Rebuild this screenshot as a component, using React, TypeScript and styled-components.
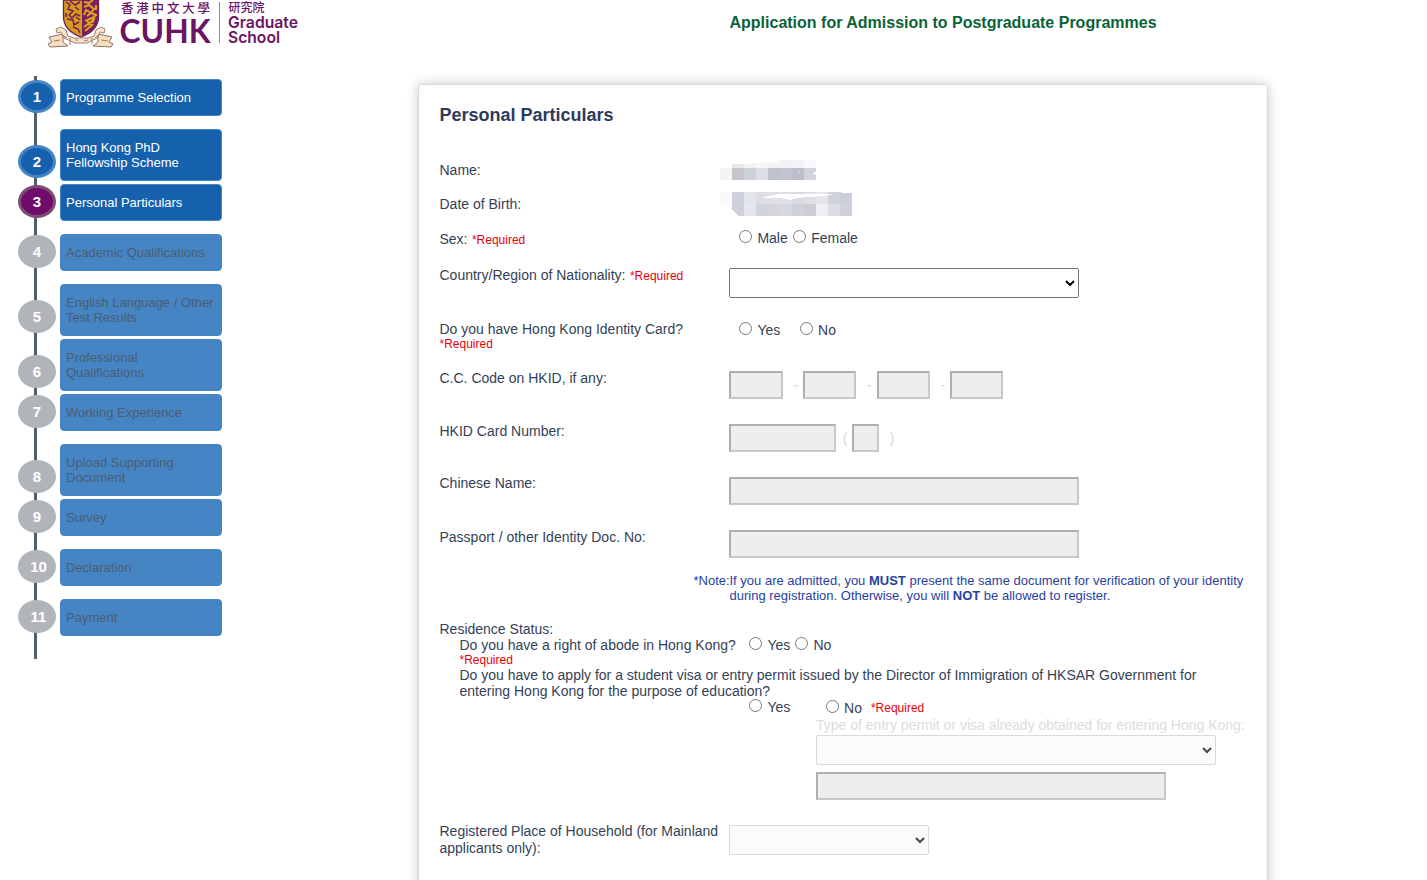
import React from 'react';
import styled, { createGlobalStyle, css } from 'styled-components';

const GlobalStyle = createGlobalStyle`
  * { box-sizing: border-box; }
  html, body { margin: 0; padding: 0; background: #fff; overflow: hidden; }
  body { font-family: Arial, "Liberation Sans", "Noto Sans CJK TC", sans-serif; font-size: 14px; color: #343f58; }
`;

const Page = styled.div`
  height: 880px;
  overflow: hidden;
  display: flex;
  flex-direction: column;
`;

const Header = styled.header`
  display: flex;
  flex: none;
  height: 76px;
`;

const LogoArea = styled.div`
  width: 729.5px;
  padding-left: 44px;
  svg { display: block; }
`;

const PageTitle = styled.h1`
  margin: 13px 0 0;
  font-size: 16px;
  line-height: 20px;
  font-weight: bold;
  color: #0b6238;
  white-space: nowrap;
`;

const Body = styled.div`
  display: flex;
  align-items: flex-start;
`;

const Sidebar = styled.nav`
  flex: none;
  width: 418px;
`;

const StepList = styled.ol`
  list-style: none;
  margin: 0;
  padding: 3px 0 10px 18px;
  height: 583px;
  background: linear-gradient(#525f6b, #525f6b) 34px 0 / 3px 100% no-repeat;
`;

type StepState = 'done' | 'current' | 'pending';

const Step = styled.li<{ $double?: boolean }>`
  display: flex;
  align-items: flex-start;
  gap: 4px;
  margin-bottom: ${(p) => (p.$double ? 3 : 13)}px;
`;

const badgeColours = {
  done: css`background: #1661ae; border-color: #4585c3;`,
  current: css`background: #700c6c; border-color: #7b4f70;`,
  pending: css`background: #b1b5ba; border-color: #b1b5ba;`,
};

const StepBadge = styled.span<{ $state: StepState; $double?: boolean; $wide?: boolean }>`
  width: 38px;
  height: 33px;
  margin-top: ${(p) => (p.$double ? 16 : 1)}px;
  border: 3px solid;
  border-radius: 50%;
  display: flex;
  align-items: center;
  justify-content: center;
  padding-left: ${(p) => (p.$wide ? 3 : 0)}px;
  color: #fff;
  font-size: 15px;
  font-weight: bold;
  ${(p) => badgeColours[p.$state]}
`;

const StepLabel = styled.span<{ $state: StepState; $double?: boolean }>`
  width: 162px;
  height: ${(p) => (p.$double ? 52 : 37)}px;
  display: flex;
  align-items: center;
  padding: 0 5px;
  border: 1px solid #4585c3;
  border-radius: 4px;
  font-size: 13px;
  line-height: 15px;
  white-space: pre;
  background: ${(p) => (p.$state === 'pending' ? '#4585c3' : '#1661ae')};
  color: ${(p) => (p.$state === 'pending' ? '#4b5d72' : '#fff')};
`;

const Card = styled.main`
  width: 850px;
  height: 860px;
  margin-top: 8px;
  padding: 20px 0 0 20.5px;
  background: #fff;
  border: 1px solid #d9d9d9;
  border-radius: 4px;
  box-shadow: 0 0 12px rgba(0, 0, 0, 0.22);
`;

const SectionTitle = styled.h2`
  margin: 0;
  height: 48px;
  font-size: 18px;
  line-height: 20px;
  color: #2e3a5c;
`;

const Row = styled.div<{ $height: number }>`
  display: grid;
  grid-template-columns: 289.5px 1fr;
  height: ${(p) => p.$height}px;
`;

const Label = styled.div<{ $top: number; $line?: number }>`
  padding-top: ${(p) => p.$top}px;
  line-height: ${(p) => p.$line ?? 16}px;
  white-space: nowrap;
`;

const Field = styled.div<{ $top: number }>`
  padding-top: ${(p) => p.$top}px;
`;

const Required = styled.span<{ $block?: boolean; $gap?: number }>`
  color: #e8000b;
  font-size: 12px;
  line-height: 14px;
  margin-left: ${(p) => p.$gap ?? 0}px;
  ${(p) => p.$block && css`display: block;`}
`;

const Options = styled.div<{ $indent: number; $gap: number }>`
  display: flex;
  align-items: center;
  gap: ${(p) => p.$gap}px;
  padding-left: ${(p) => p.$indent}px;
  height: 16px;
`;

const Option = styled.label<{ $raised?: boolean }>`
  display: flex;
  align-items: center;
  gap: 5.4px;
  line-height: 16px;
  white-space: nowrap;
  margin-bottom: ${(p) => (p.$raised ? 2 : 0)}px;
`;

const Radio = styled.input.attrs({ type: 'radio' })`
  width: 13px;
  height: 13px;
  margin: 0 0 3px;
`;

const Select = styled.select<{ $width: number }>`
  display: block;
  width: ${(p) => p.$width}px;
  height: 30px;
  font: 14px Arial, "Liberation Sans", sans-serif;

  &:disabled {
    opacity: 1;
    color: #484848;
    background-color: #fbfbfb;
    border-color: #d9d9d9;
    border-radius: 2px;
  }
`;

const TextBox = styled.input.attrs({ type: 'text', disabled: true })<{ $width: number }>`
  display: block;
  flex: none;
  width: ${(p) => p.$width}px;
  height: 28px;
  padding: 0;
  background: #eee;
  border: 2px solid;
  border-color: #afafaf #c8c8c8 #c8c8c8 #afafaf;
`;

const Inline = styled.div`
  display: flex;
  align-items: center;
`;

const Separator = styled.span<{ $width: number; $pad: number }>`
  width: ${(p) => p.$width}px;
  padding-left: ${(p) => p.$pad}px;
  color: #d6d8dc;
  line-height: 28px;
`;

const Note = styled.p`
  display: grid;
  grid-template-columns: 36px 1fr;
  margin: 0 0 18px 254px;
  font-size: 13px;
  line-height: 15px;
  color: #283f9f;
  white-space: nowrap;
`;

const Residence = styled.section`
  height: 194px;
  line-height: 16px;
  white-space: nowrap;
`;

const Questions = styled.div`
  padding-left: 20px;
`;

const AbodeRow = styled.div`
  display: grid;
  grid-template-columns: 289.5px 1fr;
  height: 30px;
`;

const VisaText = styled.div`
  height: 32px;
`;

const VisaOptions = styled.div`
  display: flex;
  align-items: center;
  height: 18px;
  padding-left: 289.5px;
`;

const VisaType = styled.div`
  padding-left: 356.5px;
  color: #dcdcdc;
`;

const VisaFields = styled.div`
  display: grid;
  gap: 7px;
  padding-top: 2px;
`;

const Mosaic = styled.svg`
  display: block;
  margin-left: -9px;
`;

const Logo = () => (
  <svg width="270" height="50" viewBox="44 0 270 50">
    <path d="M49 37l14-3v8l5 4-18 1-2-3 4-2zM112 37l-14-3v8l-5 4 18 1 2-3-4-2z" fill="#f4dfbf" stroke="#85605c" strokeWidth="0.9" />
    <path d="M56 29l5-2 5 3 2 6 6 2h14l6-2 2-6 5-3 4 2-1 4-4-1-3 6-10 5H75l-11-5-3-6-4 1z" fill="#f7e5ca" stroke="#85605c" strokeWidth="0.8" />
    <path d="M63.5 0h35v17c0 10-7 16-17.500 20C70.500 33 63.500 27 63.500 17z" fill="#d89a18" stroke="#6c1765" strokeWidth="1.3" />
    <path d="M82 0h16v17c0 10-7 16-16 19z" fill="#76205d" />
    <path d="M66 2l4 3-2 4 5 2-4 4 3 3 4-4 4 2M70 1l5 4 5-3M75 7l4 3M67 19l6 1 1 5 5-3M73 27l5 2 2 4M76 17l4 3M66 13v4" fill="none" stroke="#711c60" strokeWidth="1.5" />
    <path d="M84 2l5 1 4-3M84 7l5-2 5 4-3 4-5-3-2 5M96 5v5M87 16l4-3 5 2-4 3-5 2M85 20l5 3 5-5M84 27l4-3 4 1-7 6M94 20l-2 3" fill="none" stroke="#e0a31b" strokeWidth="2" />
    <path d="M70 38v7M75 40h3M84 41l4-1M92 38v6M62 35l5 3M99 35l-4 3M54 41l6-1M101 40l7 1" fill="none" stroke="#a97561" strokeWidth="1" />
    <g fill="#6b1466">
      <text x="121" y="12.500" fontFamily="Noto Sans CJK TC, sans-serif" fontSize="12.5" fontWeight="500" textLength="89">香港中文大學</text>
      <text x="119.5" y="43" fontFamily="Lato, sans-serif" fontSize="33" fontWeight="700" textLength="91" lengthAdjust="spacingAndGlyphs">CUHK</text>
      <text x="228.500" y="11.500" fontFamily="Noto Sans CJK TC, sans-serif" fontSize="12" fontWeight="500" textLength="36">研究院</text>
      <text x="228" y="27.500" fontFamily="Inter, sans-serif" fontSize="16" fontWeight="600" textLength="70" lengthAdjust="spacingAndGlyphs">Graduate</text>
      <text x="228" y="43" fontFamily="Inter, sans-serif" fontSize="16" fontWeight="600" textLength="52" lengthAdjust="spacingAndGlyphs">School</text>
    </g>
    <path d="M219.500 2v41" stroke="#a77ba4" />
  </svg>
);

const nameTop = ['#fff', '#e8e8ea', '#f1f2f4', '#f7f7f9', '#f2f3f5', '#f2f2f5', '#f2f3f6', '#f9f9fb'];
const nameBottom = ['#f5f5f6', '#c6c6ca', '#ccd2d8', '#dcdde5', '#bdc3c9', '#c2c5cf', '#bcbfcb', '#d2d4dd'];
const birthTop = ['#fbf9f9', '#ced1db', '#e3e5eb', '#dcdee3', '#dee0e4', '#dee0e5', '#d8dae4', '#dfe0e4', '#e5e6ea', '#d1d2d8', '#cbced9'];
const birthBottom = ['#fcfafa', '#cfd1da', '#e6e6ec', '#d0d4dc', '#d5d5da', '#d5d8e0', '#d0d1d7', '#cdcdd7', '#f0f0f3', '#dcdce2', '#ced1da'];

const HiddenName = () => (
  <Mosaic width="96" height="20" shapeRendering="crispEdges">
    {nameTop.map((c, i) => <rect key={i} x={i * 12} y="0" width="12" height="8" fill={c} />)}
    {nameBottom.map((c, i) => <rect key={i} x={i * 12} y="8" width="12" height="12" fill={c} />)}
    <path d="M0 0h62l-12 3-15 0-11 1H0zM92 13l4-1v3zM79 12h1v1h-1z" fill="#fff" />
  </Mosaic>
);

const HiddenBirth = () => (
  <Mosaic width="132" height="24" shapeRendering="crispEdges">
    {birthTop.map((c, i) => <rect key={i} x={i * 12} y="0" width="12" height="12" fill={c} />)}
    {birthBottom.map((c, i) => <rect key={i} x={i * 12} y="12" width="12" height="12" fill={c} />)}
    <path d="M0 12l12 6 6 6H0zM43 5l17-3 51 0v1l-21 2-14 1-6 2-9-2H43zM121 0h11v1h-11z" fill="#fff" />
  </Mosaic>
);

const steps: { text: string; state: StepState }[] = [
  { text: 'Programme Selection', state: 'done' },
  { text: 'Hong Kong PhD\nFellowship Scheme', state: 'done' },
  { text: 'Personal Particulars', state: 'current' },
  { text: 'Academic Qualifications', state: 'pending' },
  { text: 'English Language / Other\nTest Results', state: 'pending' },
  { text: 'Professional\nQualifications', state: 'pending' },
  { text: 'Working Experience', state: 'pending' },
  { text: 'Upload Supporting\nDocument', state: 'pending' },
  { text: 'Survey', state: 'pending' },
  { text: 'Declaration', state: 'pending' },
  { text: 'Payment', state: 'pending' },
];

export default function App() {
  return (
    <Page>
      <GlobalStyle />
      <Header>
        <LogoArea><Logo /></LogoArea>
        <PageTitle>Application for Admission to Postgraduate Programmes</PageTitle>
      </Header>
      <Body>
        <Sidebar>
          <StepList>
            {steps.map(({ text, state }, i) => {
              const double = text.includes('\n');
              return (
                <Step key={text} $double={double}>
                  <StepBadge $state={state} $double={double} $wide={i > 8}>{i + 1}</StepBadge>
                  <StepLabel $state={state} $double={double}>{text}</StepLabel>
                </Step>
              );
            })}
          </StepList>
        </Sidebar>
        <Card>
          <SectionTitle>Personal Particulars</SectionTitle>
          <Row $height={34}>
            <Label $top={9}>Name:</Label>
            <Field $top={7}><HiddenName /></Field>
          </Row>
          <Row $height={34}>
            <Label $top={9}>Date of Birth:</Label>
            <Field $top={5}><HiddenBirth /></Field>
          </Row>
          <Row $height={37}>
            <Label $top={10}>Sex: <Required $gap={0.5}>*Required</Required></Label>
            <Field $top={9}>
              <Options $indent={10} $gap={5}>
                <Option><Radio name="sex" />Male</Option>
                <Option><Radio name="sex" />Female</Option>
              </Options>
            </Field>
          </Row>
          <Row $height={53}>
            <Label $top={9}>Country/Region of Nationality: <Required $gap={0.5}>*Required</Required></Label>
            <Field $top={10}><Select $width={350} /></Field>
          </Row>
          <Row $height={53}>
            <Label $top={10}>Do you have Hong Kong Identity Card?<Required $block>*Required</Required></Label>
            <Field $top={11}>
              <Options $indent={10} $gap={19.4}>
                <Option><Radio name="hkid" />Yes</Option>
                <Option><Radio name="hkid" />No</Option>
              </Options>
            </Field>
          </Row>
          <Row $height={53}>
            <Label $top={6}>C.C. Code on HKID, if any:</Label>
            <Field $top={7}>
              <Inline>
                <TextBox $width={54} />
                <Separator $width={20} $pad={10.5}>-</Separator>
                <TextBox $width={53} />
                <Separator $width={21} $pad={11}>-</Separator>
                <TextBox $width={53} />
                <Separator $width={20} $pad={10.5}>-</Separator>
                <TextBox $width={53} />
              </Inline>
            </Field>
          </Row>
          <Row $height={53}>
            <Label $top={6}>HKID Card Number:</Label>
            <Field $top={7}>
              <Inline>
                <TextBox $width={107} />
                <Separator $width={16} $pad={6.7}>(</Separator>
                <TextBox $width={27} />
                <Separator $width={20} $pad={10.7}>)</Separator>
              </Inline>
            </Field>
          </Row>
          <Row $height={53}>
            <Label $top={5}>Chinese Name:</Label>
            <Field $top={7}><TextBox $width={350} /></Field>
          </Row>
          <Row $height={50}>
            <Label $top={6}>Passport / other Identity Doc. No:</Label>
            <Field $top={7}><TextBox $width={350} /></Field>
          </Row>
          <Note>
            <span>*Note:</span>
            <span>
              If you are admitted, you <b>MUST</b> present the same document for verification of your identity<br />
              during registration. Otherwise, you will <b>NOT</b> be allowed to register.
            </span>
          </Note>
          <Residence>
            Residence Status:
            <Questions>
              <AbodeRow>
                <div>Do you have a right of abode in Hong Kong?<Required $block>*Required</Required></div>
                <Options $indent={0} $gap={4.8}>
                  <Option><Radio name="abode" />Yes</Option>
                  <Option><Radio name="abode" />No</Option>
                </Options>
              </AbodeRow>
              <VisaText>
                Do you have to apply for a student visa or entry permit issued by the Director of Immigration of HKSAR Government for<br />
                entering Hong Kong for the purpose of education?
              </VisaText>
              <VisaOptions>
                <Options $indent={0} $gap={35.4}>
                  <Option $raised><Radio name="visa" />Yes</Option>
                  <Option><Radio name="visa" />No</Option>
                </Options>
                <Required $gap={9}>*Required</Required>
              </VisaOptions>
              <VisaType>
                Type of entry permit or visa already obtained for entering Hong Kong:
                <VisaFields>
                  <Select $width={400} disabled />
                  <TextBox $width={350} />
                </VisaFields>
              </VisaType>
            </Questions>
          </Residence>
          <Row $height={60}>
            <Label $top={8} $line={17}>Registered Place of Household (for Mainland<br />applicants only):</Label>
            <Field $top={10}><Select $width={200} disabled /></Field>
          </Row>
        </Card>
      </Body>
    </Page>
  );
}
